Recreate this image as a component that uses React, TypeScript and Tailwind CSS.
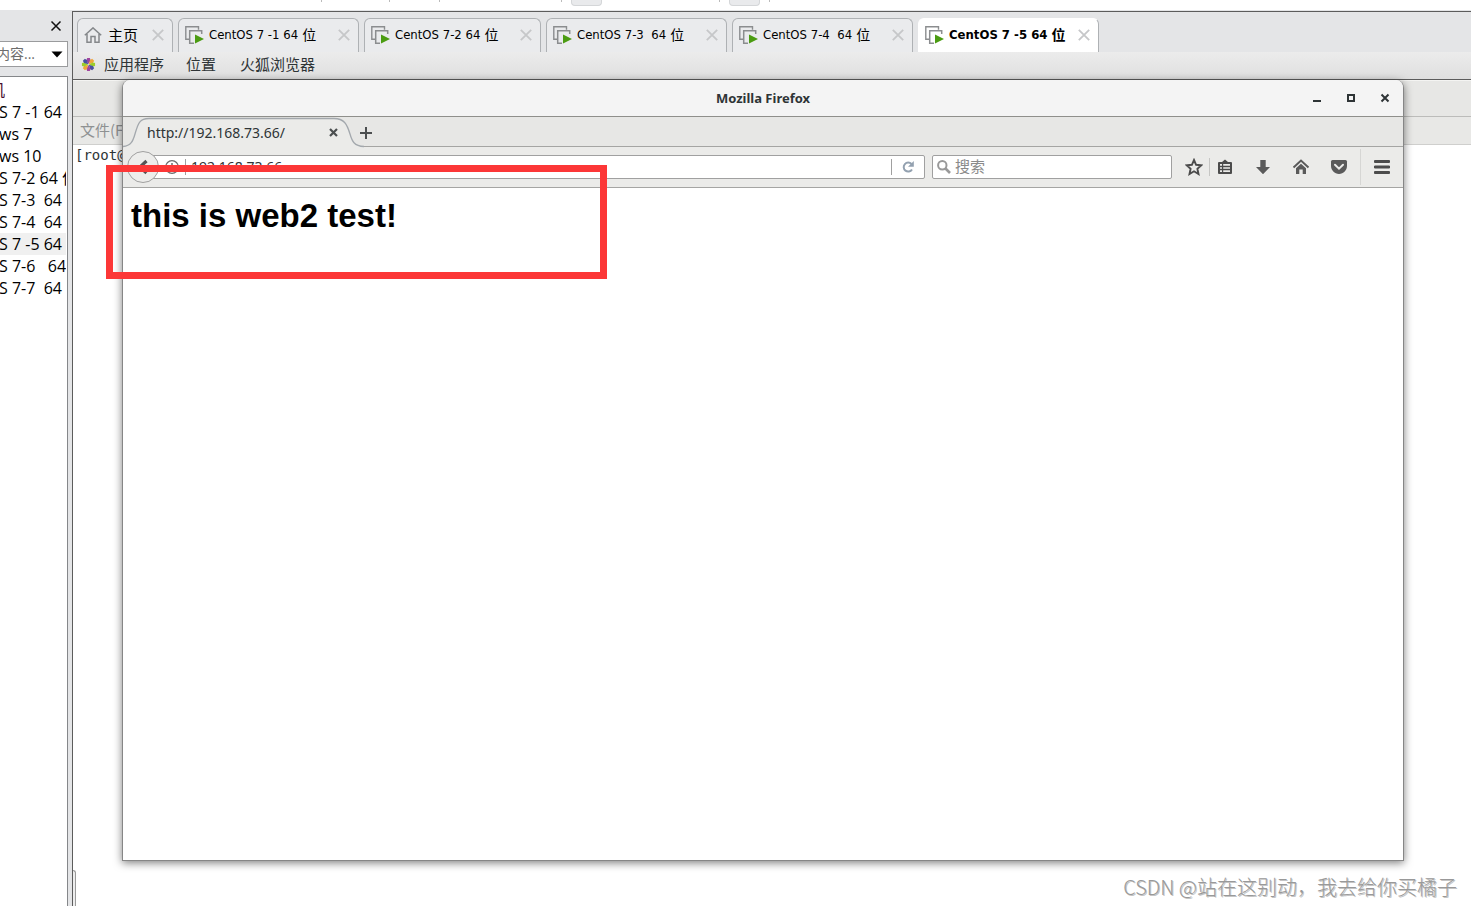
import React from 'react'

const vmTabs = [
  { name: 'CentOS 7 -1 64', width: 'w-[181px]', active: false },
  { name: 'CentOS 7-2 64', width: 'w-[177px]', active: false },
  { name: 'CentOS 7-3  64', width: 'w-[181px]', active: false },
  { name: 'CentOS 7-4  64', width: 'w-[181px]', active: false },
  { name: 'CentOS 7 -5 64', width: 'w-[181px]', active: true },
]

const library = [
  'S 7 -1 64 位',
  'ws 7',
  'ws 10',
  'S 7-2 64 位',
  'S 7-3  64 位',
  'S 7-4  64 位',
  'S 7 -5 64 位',
  'S 7-6   64 位',
  'S 7-7  64 位',
]

const petals = ['#a0459f', '#f0a63a', '#9ccd2a', '#4a4fa0', '#a0459f', '#f0a63a', '#9ccd2a', '#4a4fa0']

function VmIcon() {
  return (
    <svg className="h-[18px] w-[19px] shrink-0" viewBox="0 0 19 18" fill="none">
      <path d="M4 13.300H.8V.8h12.700v3" stroke="#8b8d8f" strokeWidth="1.400" />
      <path d="M9 17.200H4.700V4.700h12V8" stroke="#8b8d8f" strokeWidth="1.500" />
      <path d="M10 8.500v9l9-4.500z" fill="#4b9c12" />
    </svg>
  )
}

function CloseButton({ label }: { label: string }) {
  return (
    <button aria-label={label} className="flex h-4 w-3 shrink-0 items-center justify-center">
      <svg className="h-3 w-3" viewBox="0 0 12 12" stroke="#c6c7c9" strokeWidth="1.800">
        <path d="M.8.8l10.400 10.400M11.200.8L.8 11.200" />
      </svg>
    </button>
  )
}

function TopStrip() {
  return (
    <div className="relative h-[11px] shrink-0 border-b border-[#e4e5e7] bg-white">
      {/* bottoms of the toolbar separators and buttons */}
      <i className="absolute left-[321px] top-0 h-[2px] w-px bg-[#bbb]" />
      <i className="absolute left-[389px] top-0 h-[2px] w-px bg-[#bbb]" />
      <i className="absolute left-[439px] top-0 h-[2px] w-px bg-[#bbb]" />
      <i className="absolute left-[561px] top-0 h-[2px] w-px bg-[#bbb]" />
      <i className="absolute left-[719px] top-0 h-[2px] w-px bg-[#bbb]" />
      <i className="absolute left-[769px] top-0 h-[2px] w-px bg-[#bbb]" />
      <i className="absolute left-[571px] top-0 h-[6px] w-[31px] rounded-b border border-t-0 border-[#d4d6d8] bg-[#e9eaec]" />
      <i className="absolute left-[729px] top-0 h-[6px] w-[31px] rounded-b border border-t-0 border-[#d4d6d8] bg-[#e9eaec]" />
    </div>
  )
}

function Sidebar() {
  return (
    <aside className="flex w-[72px] shrink-0 flex-col overflow-hidden bg-[#e4e5e7] font-['Open_Sans','Noto_Sans_CJK_SC',sans-serif] text-sm leading-[22px]">
      <div className="flex h-[30px] items-center justify-end pr-[11px]">
        <button aria-label="关闭" className="p-px">
          <svg className="h-2 w-2 overflow-visible" viewBox="0 0 8 8" stroke="#111" strokeWidth="1.500">
            <path d="M-.5-.5l9 9M8.500-.5l-9 9" />
          </svg>
        </button>
      </div>
      <button className="mr-1 flex h-[26px] items-center justify-between border border-l-0 border-[#9a9b9d] bg-white pr-1 text-[#6d6d6d]">
        <span className="-ml-1">内容...</span>
        <svg className="h-[7px] w-3" viewBox="0 0 12 7">
          <path d="M.5.500h11L6 6.500z" fill="#000" />
        </svg>
      </button>
      <div className="mr-1 mt-[9px] flex-1 overflow-hidden border-r border-t border-[#85878a] bg-white pt-0.5 text-base leading-[22px] text-black">
        <div className="-ml-[11px] h-[22px] text-[#4a0d2c]">机</div>
        <ul>
          {library.map((item) => (
            <li
              key={item}
              className={item.includes('-5') ? 'mr-px h-[22px] overflow-hidden whitespace-pre bg-[#f0f0f0]' : 'mr-px h-[22px] overflow-hidden whitespace-pre'}
            >
              <a href="#vm" className="-ml-px">{item}</a>
            </li>
          ))}
        </ul>
      </div>
    </aside>
  )
}

function VmTabBar() {
  return (
    <nav className="flex h-10 shrink-0 items-end gap-[5px] overflow-hidden bg-[#e4e5e7] pl-1 font-['DejaVu_Sans_Condensed','DejaVu_Sans',sans-serif] text-[13px] text-black">
      <div className="flex h-[34px] w-24 shrink-0 items-center rounded-t-md border border-b-0 border-[#aeb1b4] bg-[#eaebed] pb-px pl-1.5 pr-2">
        <svg className="h-4 w-[18px] shrink-0" viewBox="0 0 18 16" fill="none" stroke="#85888b" strokeWidth="1.500">
          <path d="M.8 8.200L9 .9l8.200 7.300M3 7v8.200h4V9.500h4v5.700h4V7" />
        </svg>
        <button className="ml-1.5 flex-1 text-left font-['Noto_Sans_CJK_SC',sans-serif] text-[15px]">主页</button>
        <CloseButton label="关闭 主页" />
      </div>
      {vmTabs.map((tab) => (
        <div
          key={tab.name}
          className={`flex h-[34px] shrink-0 items-center rounded-t-md border border-b-0 pb-px pl-1.5 pr-2 ${tab.width} ${
            tab.active ? 'border-l-white border-t-white border-r-[#aeb1b4] bg-white font-bold' : 'border-[#aeb1b4] bg-[#eaebed]'
          }`}
        >
          <VmIcon />
          <button className="ml-[5px] flex flex-1 items-center gap-1 whitespace-pre text-left leading-4">
            {tab.name}
            <span className="pb-0.5 font-['Noto_Sans_CJK_SC',sans-serif] text-sm leading-4">位</span>
          </button>
          <CloseButton label={`关闭 ${tab.name}`} />
        </div>
      ))}
    </nav>
  )
}

function GnomeBar() {
  return (
    <div className="flex h-7 shrink-0 items-center border-b border-[#5c5c5c] bg-linear-to-b from-[#ececec] to-[#dfdfdf] pb-0.5 pl-2 font-['Noto_Sans_CJK_SC',sans-serif] text-[15px] text-[#2e3436]">
      <svg className="mr-2 h-[15px] w-[15px]" viewBox="0 0 16 16">
        {petals.map((color, i) => (
          <path key={i} d="M8 7.500L5.800 3.500 6.500 1h3l.7 2.500z" fill={color} transform={`rotate(${i * 45} 8 8)`} />
        ))}
      </svg>
      <button>应用程序</button>
      <button className="ml-[22px]">位置</button>
      <button className="ml-6">火狐浏览器</button>
    </div>
  )
}

function Terminal() {
  return (
    <div className="flex h-full flex-col">
      <div className="h-[37px] border-b border-t border-[#bcbcba] border-t-[#f4f4f2] bg-[#e7e7e5]" />
      <div className="flex h-7 items-center border-b border-[#cfcfcd] bg-[#e8e8e6] pl-[7px] font-['Noto_Sans_CJK_SC',sans-serif] text-[15px] text-[#8e9192]">
        文件(F)
      </div>
      <div className="pl-0.5 font-['DejaVu_Sans_Mono',monospace] text-sm leading-5 text-[#2e3436]">[root@</div>
    </div>
  )
}

function ToolbarButton({ label, children }: { label: string; children: React.ReactNode }) {
  return (
    <button aria-label={label} className="flex h-6 w-[38px] items-center justify-center">
      <svg className="h-[18px] w-[18px]" viewBox="0 0 18 18">
        {children}
      </svg>
    </button>
  )
}

function Firefox() {
  return (
    <section className="absolute bottom-[45px] left-[49px] right-[67px] top-0 flex flex-col overflow-hidden rounded-t-lg border border-t-0 border-[#868686] bg-white font-['Noto_Sans',sans-serif] text-sm text-[#2e3436] shadow-[0_2px_8px_rgba(0,0,0,0.5)]">
      <header className="grid h-[37px] shrink-0 grid-cols-[1fr_auto_1fr] items-center border-b border-[#8f8f8b] bg-[#f4f4f4]">
        <span />
        <h1 className="font-['Noto_Sans',sans-serif] text-[13px] font-bold">Mozilla Firefox</h1>
        <div className="flex justify-end pr-[13px]">
          <button aria-label="最小化" className="mr-[24px]">
            <svg className="h-[10px] w-[10px]" viewBox="0 0 10 10"><path d="M1 7h8v2H1z" fill="#2e3436" /></svg>
          </button>
          <button aria-label="最大化" className="mr-[24px]">
            <svg className="h-[10px] w-[10px]" viewBox="0 0 10 10"><path d="M2 2h6v6H2z" fill="none" stroke="#2e3436" strokeWidth="2" /></svg>
          </button>
          <button aria-label="关闭">
            <svg className="h-[10px] w-[10px]" viewBox="0 0 10 10"><path d="M1.500 1.500l7 7M8.500 1.500l-7 7" stroke="#2e3436" strokeWidth="2" /></svg>
          </button>
        </div>
      </header>

      <div className="flex h-[30px] shrink-0 items-center border-b border-[#a5a5a3] bg-[#e7e7e5]">
        <div className="relative flex h-[30px] w-[237px] items-center pl-6 pr-5 pt-0.5">
          <svg className="absolute left-0 top-0 h-[30px] w-[241px] overflow-visible" viewBox="0 0 241 30">
            <path
              d="M0 29.500C8 29 10 24 12 17C15 7 16 1.500 26 1.500H211C221 1.500 224 7 227 17C229 24 231 29 241 29.500V31H0z"
              fill="#ebebe9"
            />
            <path
              d="M0 29.500C8 29 10 24 12 17C15 7 16 1.500 26 1.500H211C221 1.500 224 7 227 17C229 24 231 29 241 29.500"
              fill="none"
              stroke="#a3a8ad"
              strokeWidth="1.300"
            />
          </svg>
          <button className="relative flex-1 text-left">http://192.168.73.66/</button>
          <button aria-label="关闭标签页" className="relative mr-0.5">
            <svg className="h-[9px] w-[9px]" viewBox="0 0 9 9"><path d="M1 1l7 7M8 1L1 8" stroke="#4c4f50" strokeWidth="2.200" /></svg>
          </button>
        </div>
        <button aria-label="新标签页" className="pt-0.5">
          <svg className="h-3 w-3" viewBox="0 0 12 12"><path d="M6 0v12M0 6h12" stroke="#4c4f50" strokeWidth="2" /></svg>
        </button>
      </div>

      <div className="flex h-[41px] shrink-0 items-center border-b border-[#a5a5a3] bg-[#ebebe9] pl-1 pr-px">
        <button aria-label="后退" className="z-10 flex h-8 w-8 shrink-0 items-center justify-center rounded-full border border-[#a0a0a0] bg-[#ededeb]">
          <svg className="h-4 w-3" viewBox="0 0 12 16"><path d="M9.500 2L3 8l6.500 6" fill="none" stroke="#555" strokeWidth="3.200" /></svg>
        </button>
        <div className="-ml-2 flex h-6 flex-1 items-center rounded-r-xs border border-[#a0a0a0] bg-white pl-[13px]">
          <svg className="h-[14px] w-[14px] shrink-0" viewBox="0 0 14 14">
            <circle cx="7" cy="7" r="6.300" fill="none" stroke="#6b6b6b" strokeWidth="1.200" />
            <path d="M7 3v2M7 6v5" stroke="#6b6b6b" strokeWidth="1.500" />
          </svg>
          <input aria-label="网址" defaultValue="192.168.73.66" className="ml-1.5 h-4 min-w-0 flex-1 border-l border-[#a0a0a0] pl-[5px] leading-4 outline-none" />
          <button aria-label="刷新" className="flex h-4 w-[33px] items-center justify-center border-l border-[#a0a0a0]">
            <svg className="h-3 w-3" viewBox="0 0 12 12">
              <path d="M9.500 3A4.500 4.500 0 1 0 10 8.500" fill="none" stroke="#93a1b0" strokeWidth="2" />
              <path d="M11.800 0v5.800H6z" fill="#93a1b0" />
            </svg>
          </button>
        </div>
        <label className="ml-[7px] flex h-6 w-60 items-center rounded-xs border border-[#a0a0a0] bg-white pl-1">
          <svg className="h-[14px] w-[14px] shrink-0" viewBox="0 0 14 14" fill="none" stroke="#999">
            <circle cx="5.300" cy="5.300" r="4.200" strokeWidth="2" />
            <path d="M8.500 8.500l4.500 4.500" strokeWidth="2.600" />
          </svg>
          <input
            aria-label="搜索"
            placeholder="搜索"
            className="ml-1 h-5 min-w-0 flex-1 pb-0.5 font-['Noto_Sans_CJK_SC',sans-serif] text-[15px] leading-5 outline-none placeholder:text-[#8a8a8a]"
          />
        </label>
        <button aria-label="收藏" className="ml-3 flex h-[18px] w-[26px] items-center border-r border-[#c6c6c4] pl-px">
          <svg className="h-[18px] w-[18px]" viewBox="0 0 18 18">
            <path d="M9 2l2.100 4.800 5.200.5-3.900 3.500 1.100 5.200L9 13.300 4.500 16l1.100-5.200-3.900-3.500 5.200-.5z" fill="none" stroke="#4c4c4c" strokeWidth="1.900" />
          </svg>
        </button>
        <div className="-ml-1 flex">
          <ToolbarButton label="书签">
            <path d="M3 4h3l3-2.500L12 4h3q1 0 1 1v10q0 1-1 1H3q-1 0-1-1V5q0-1 1-1z" fill="#4c4c4c" />
            <path d="M4 6.800h2M7.200 6.800H14M4 10h2M7.200 10H14M4 13.200h2M7.200 13.200H14" stroke="#ebebe9" strokeWidth="1.700" />
          </ToolbarButton>
          <ToolbarButton label="下载">
            <path d="M6.300 2h5.400v7H16l-7 7.200L2 9h4.300z" fill="#5a5a5a" />
          </ToolbarButton>
          <ToolbarButton label="主页">
            <path d="M1.500 9.500L9 2.500l7.500 7" fill="none" stroke="#5a5a5a" strokeWidth="2" />
            <path d="M9 5.700l5 4.600V16h-3.300v-4.500H7.300V16H4v-5.700z" fill="#5a5a5a" />
          </ToolbarButton>
          <ToolbarButton label="Pocket">
            <path d="M2.500 2h13Q17 2 17 3.500V8c0 4-3.500 8-8 8S1 12 1 8V3.500Q1 2 2.500 2z" fill="#5a5a5a" />
            <path d="M5 6.800l4 3.900 4-3.900" fill="none" stroke="#ebebe9" strokeWidth="2" strokeLinecap="round" />
          </ToolbarButton>
        </div>
        <div className="ml-[2px] flex h-9 items-center border-l border-[#d6d6d4]">
          <button aria-label="打开菜单" className="flex h-6 w-[41px] items-center justify-center">
            <svg className="h-[14px] w-4" viewBox="0 0 16 14">
              <path d="M1 1.500h14M1 7h14M1 12.500h14" stroke="#4c4c4c" strokeWidth="2.800" strokeLinecap="round" />
            </svg>
          </button>
        </div>
      </div>

      <main className="flex-1 px-2 pt-1.5 text-black">
        <h2 className="font-['Liberation_Sans',sans-serif] text-[33px] font-bold leading-[44px]">this is web2 test!</h2>
      </main>
    </section>
  )
}

function App() {
  return (
    <div className="relative flex h-screen flex-col overflow-hidden bg-white">
      <TopStrip />
      <div className="flex min-h-0 flex-1">
        <Sidebar />
        <div className="flex min-w-0 flex-1 flex-col border-l border-t border-[#5c5c5c]">
          <VmTabBar />
          <GnomeBar />
          <div className="relative min-h-0 flex-1 bg-white">
            <Terminal />
            <div className="absolute bottom-0 left-0 h-9 w-[3px] rounded-tr border-r border-t border-[#9a9a9a] bg-[#ededed]" />
            <Firefox />
            {/* red marker around the page heading */}
            <div className="pointer-events-none absolute left-[33px] top-[85px] z-20 h-[114px] w-[501px] border-[7px] border-[#fc3737]" />
          </div>
        </div>
      </div>
      <p className="absolute bottom-[5px] right-3.5 font-['Noto_Sans_CJK_SC',sans-serif] text-xl font-light text-[#999] [text-shadow:1px_1px_0_#c4c4c4]">
        CSDN @站在这别动，我去给你买橘子
      </p>
    </div>
  )
}

export default App
